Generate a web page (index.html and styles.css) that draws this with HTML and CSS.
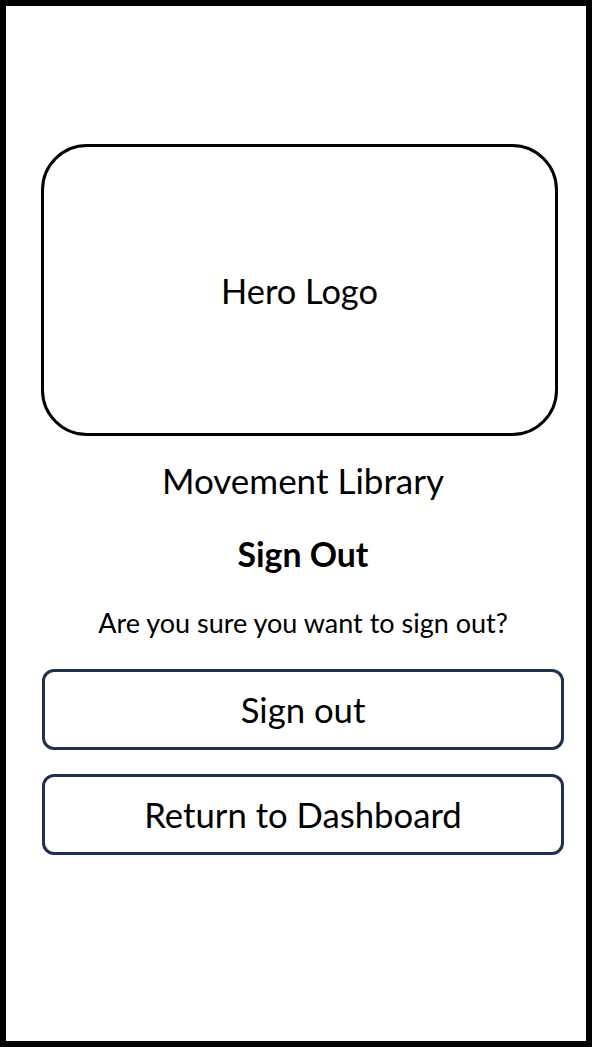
FILE: index.html
```html
<!DOCTYPE html>
<html lang="en">
<head>
<meta charset="utf-8">
<title>Sign Out</title>
<link rel="stylesheet" href="styles.css">
</head>
<body>
<div class="frame">
  <div class="content">
    <div class="hero">Hero Logo</div>
    <div class="app-name">Movement Library</div>
    <h1 class="title">Sign Out</h1>
    <p class="question">Are you sure you want to sign out?</p>
    <button class="btn btn-first" type="button">Sign out</button>
    <button class="btn btn-second" type="button">Return to Dashboard</button>
  </div>
</div>
</body>
</html>
```
FILE: styles.css
```css
html, body {
  margin: 0;
  padding: 0;
  background: #ffffff;
}
.frame {
  width: 592px;
  height: 1047px;
  box-sizing: border-box;
  border: 6px solid #000000;
  background: #ffffff;
  font-family: Lato, "Open Sans", "Liberation Sans", sans-serif;
  color: #000000;
}
.content {
  display: flex;
  flex-direction: column;
  align-items: stretch;
  width: 522px;
  margin-left: 36px;
  padding-top: 138px;
}
.hero {
  box-sizing: border-box;
  width: 517px;
  height: 292px;
  margin-left: -1px;
  border: 3px solid #000000;
  border-radius: 46px;
  display: flex;
  align-items: center;
  justify-content: center;
  font-size: 34.4px;
}
.app-name {
  margin-top: 24px;
  height: 40px;
  line-height: 40px;
  text-align: center;
  font-size: 35px;
}
.title {
  margin: 34px 0 0;
  height: 40px;
  line-height: 40px;
  text-align: center;
  font-size: 33.8px;
  font-weight: 700;
}
.question {
  margin: 34px 0 0;
  height: 30px;
  line-height: 30px;
  text-align: center;
  font-size: 27px;
}
.btn {
  box-sizing: border-box;
  width: 522px;
  height: 81px;
  border: 3px solid #1f3050;
  border-radius: 12px;
  background: #ffffff;
  font-family: inherit;
  font-size: 34.7px;
  color: #000000;
  padding: 0;
  display: flex;
  align-items: center;
  justify-content: center;
}
.btn-first {
  margin-top: 31px;
}
.btn-second {
  margin-top: 24px;
}
```
